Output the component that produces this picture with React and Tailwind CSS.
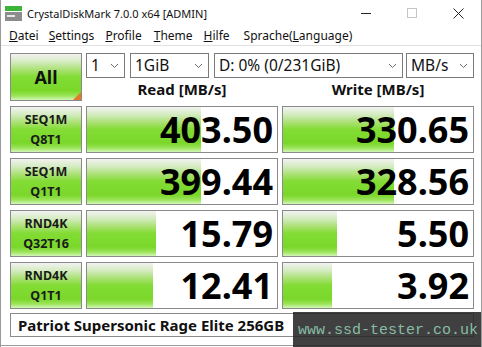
const rows = [
  { l1: 'SEQ1M', l2: 'Q8T1', read: '403.50', write: '330.65', rw: 114, ww: 111 },
  { l1: 'SEQ1M', l2: 'Q1T1', read: '399.44', write: '328.56', rw: 114, ww: 111 },
  { l1: 'RND4K', l2: 'Q32T16', read: '15.79', write: '5.50', rw: 69, ww: 54 },
  { l1: 'RND4K', l2: 'Q1T1', read: '12.41', write: '3.92', rw: 66, ww: 49 },
]

const green =
  'bg-[linear-gradient(to_bottom,#f2f2f0_0%,#d6ecc4_16%,#a6e06c_36%,#82dc34_50%,#7ad82a_80%,#9ce45a_91%,#d4f6b8_100%)]'

function Chevron() {
  return (
    <svg width="9" height="6" viewBox="0 0 9 6" className="shrink-0">
      <polyline points="1,1 4.5,4.5 8,1" fill="none" stroke="#6b6b6b" strokeWidth="1" />
    </svg>
  )
}

function Select({ w, children }) {
  return (
    <div
      className={`${w} h-[25px] border border-[#7a7a7a] bg-white flex items-center justify-between pl-[4px] pr-[5px] text-[15.5px] text-[#111]`}
    >
      <span className="leading-none">{children}</span>
      <Chevron />
    </div>
  )
}

function Cell({ value, width }) {
  return (
    <div className="relative w-[192px] h-full border border-[#8a8a8a] bg-white overflow-hidden">
      <div className={`absolute left-0 top-0 bottom-0 ${green}`} style={{ width }} />
      <div className="relative h-full flex items-center justify-end pr-[4px] pt-[1px] text-[36px] font-bold text-black leading-none">
        {value}
      </div>
    </div>
  )
}

export default function App() {
  return (
    <div className="relative w-[482px] h-[347px] bg-white overflow-hidden font-['Noto_Sans',sans-serif] text-[#111] border-x border-[#9a9a9a]">
      {/* Titelleiste */}
      <div className="h-[26px] flex items-center">
        <svg width="17" height="16" viewBox="0 0 17 16" className="ml-[4px] mt-[1px]">
          <rect x="0" y="0" width="17" height="5" fill="#3cb43c" />
          <rect x="0" y="6" width="17" height="9" fill="#8c8c8c" />
          <rect x="2" y="9" width="8" height="2" fill="#e8e8e8" />
        </svg>
        <span className="ml-[5px] text-[11px] leading-none text-[#111]">CrystalDiskMark 7.0.0 x64 [ADMIN]</span>
        <div className="ml-auto flex items-center h-full">
          <div className="w-[46px] flex justify-center">
            <div className="w-[10px] h-px bg-[#222]" />
          </div>
          <div className="w-[46px] flex justify-center">
            <div className="w-[10px] h-[10px] border border-[#c4c4c4]" />
          </div>
          <div className="w-[46px] flex justify-center">
            <svg width="11" height="11" viewBox="0 0 11 11">
              <path d="M0.5 0.5 L10.5 10.5 M10.5 0.5 L0.5 10.5" stroke="#222" strokeWidth="1" />
            </svg>
          </div>
        </div>
      </div>

      {/* Menü */}
      <div className="h-[20px] flex items-center text-[12px] leading-none border-b border-[#e2e2e2]">
        <span className="ml-[8px]"><u>D</u>atei</span>
        <span className="ml-[10px]"><u>S</u>ettings</span>
        <span className="ml-[11px]"><u>P</u>rofile</span>
        <span className="ml-[12px]"><u>T</u>heme</span>
        <span className="ml-[11px]"><u>H</u>ilfe</span>
        <span className="ml-[14px]">Sprache(<u>L</u>anguage)</span>
      </div>

      {/* Inhalt */}
      <div className="pl-[9px] pt-[7px]">
        <div className="flex gap-[4px]">
          <div className={`relative w-[72px] h-[48px] border border-[#8a8a8a] ${green} flex items-center justify-center`}>
            <span className="text-[18px] font-bold leading-none text-[#111]">All</span>
            <div className="absolute right-0 bottom-0 w-0 h-0 border-l-[8px] border-l-transparent border-b-[8px] border-b-[#e2782a]" />
          </div>
          <div className="flex flex-col">
            <div className="flex">
              <Select w="w-[39px]">1</Select>
              <div className="ml-[5px]"><Select w="w-[79px]">1GiB</Select></div>
              <div className="ml-[5px]"><Select w="w-[189px]">D: 0% (0/231GiB)</Select></div>
              <div className="ml-[3px]"><Select w="w-[68px]">MB/s</Select></div>
            </div>
            <div className="h-[23px] flex gap-[4px] text-[15px] font-bold leading-none items-center">
              <div className="w-[192px] text-center">Read [MB/s]</div>
              <div className="w-[192px] text-center">Write [MB/s]</div>
            </div>
          </div>
        </div>

        <div className="mt-[5px] flex flex-col gap-[5px]">
          {rows.map((r, i) => (
            <div key={i} className="h-[47px] flex gap-[4px]">
              <div className={`w-[72px] h-full border border-[#8a8a8a] ${green} flex flex-col items-center justify-center text-[12.5px] font-bold leading-[20px] text-[#1a1a1a]`}>
                <span>{r.l1}</span>
                <span>{r.l2}</span>
              </div>
              <Cell value={r.read} width={r.rw} />
              <Cell value={r.write} width={r.ww} />
            </div>
          ))}
        </div>

        <div className="mt-[4px] w-[464px] h-[24px] border border-[#8a8a8a] bg-white flex items-center pl-[7px] text-[15px] font-bold leading-none text-[#111]">
          Patriot Supersonic Rage Elite 256GB
        </div>
      </div>

      {/* Fensterrand unten */}
      <div className="absolute left-0 right-0 top-[345px] h-px bg-[#9a9a9a]" />

      {/* Wasserzeichen */}
      <div className="absolute left-[292px] top-[312px] w-[190px] h-[35px] bg-[rgba(38,38,38,0.88)] flex items-center pl-[5px] pt-[2px]">
        <span className="font-['Liberation_Mono',monospace] text-[15px] leading-none text-[#86bca6]">www.ssd-tester.co.uk</span>
      </div>
    </div>
  )
}
